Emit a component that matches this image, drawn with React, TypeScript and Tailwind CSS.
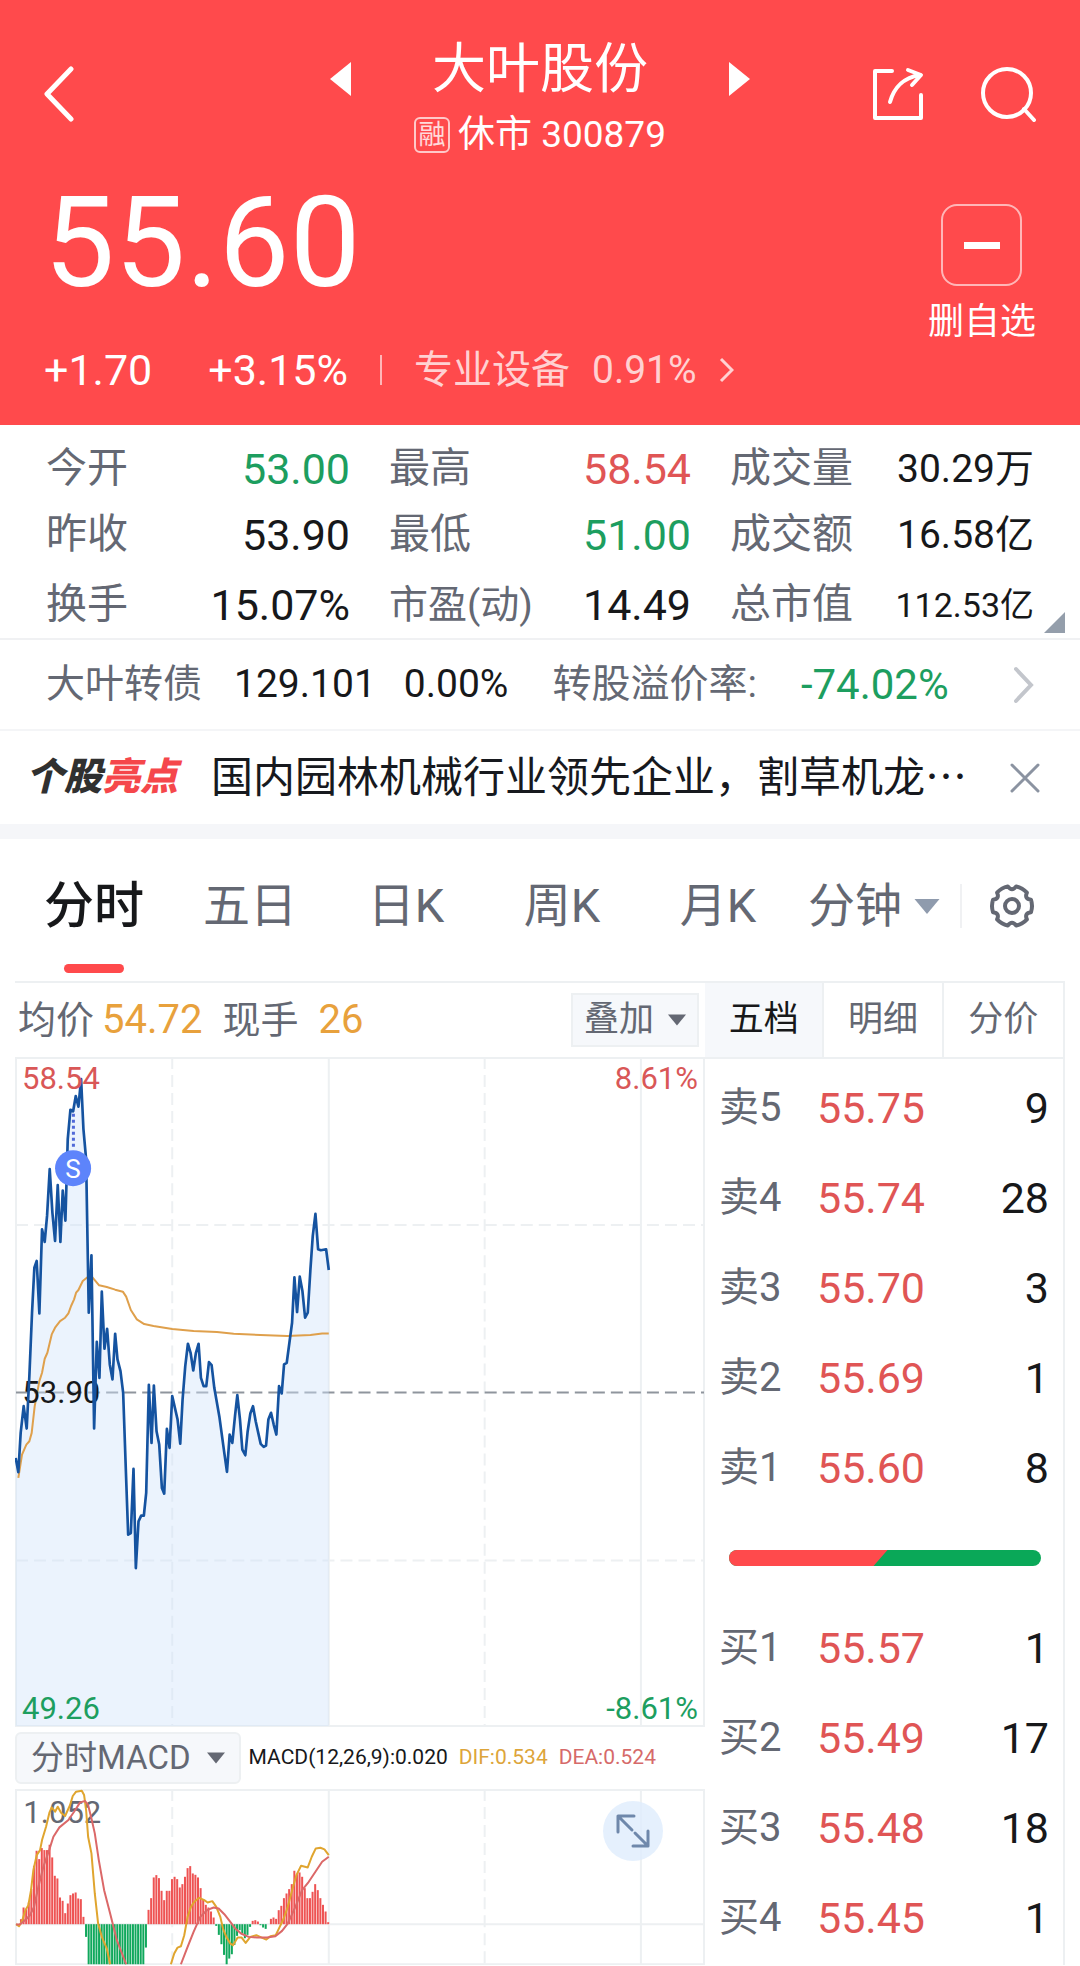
import React, { useState } from 'react';

interface Stat {
  label: string;
  value: string;
  tone?: 'up' | 'down';
  size?: string;
}

interface Level {
  label: string;
  price: string;
  volume: number;
}

const stats: Stat[][] = [
  [
    { label: '今开', value: '53.00', tone: 'down' },
    { label: '最高', value: '58.54', tone: 'up' },
    { label: '成交量', value: '30.29万', size: 'text-[39px]' },
  ],
  [
    { label: '昨收', value: '53.90' },
    { label: '最低', value: '51.00', tone: 'down' },
    { label: '成交额', value: '16.58亿', size: 'text-[39px]' },
  ],
  [
    { label: '换手', value: '15.07%' },
    { label: '市盈(动)', value: '14.49' },
    { label: '总市值', value: '112.53亿', size: 'text-[34px]' },
  ],
];

const asks: Level[] = [
  { label: '卖5', price: '55.75', volume: 9 },
  { label: '卖4', price: '55.74', volume: 28 },
  { label: '卖3', price: '55.70', volume: 3 },
  { label: '卖2', price: '55.69', volume: 1 },
  { label: '卖1', price: '55.60', volume: 8 },
];

const bids: Level[] = [
  { label: '买1', price: '55.57', volume: 1 },
  { label: '买2', price: '55.49', volume: 17 },
  { label: '买3', price: '55.48', volume: 18 },
  { label: '买4', price: '55.45', volume: 1 },
];

const pricePoints =
  '2,1201 10,1244 17,1126 26,1046 35,1113 43,956 51,766 58,631 65,611 73,768 81,516 89,554 96,476 104,336 112,466 120,551 128,384 136,554 143,400 151,490 158,246 166,158 174,163 182,117 190,149 198,66 205,216 213,306 221,766 229,594 237,1113 245,853 253,961 260,703 268,874 276,814 284,921 292,966 300,829 307,906 316,941 324,1006 332,1236 339,1431 347,1426 355,1234 362,1531 370,1391 378,1374 386,1374 393,1306 401,982 409,1156 416,984 424,1121 432,1161 440,1291 447,1308 455,1114 463,1171 471,1016 487,1086 495,1158 502,1026 510,926 518,859 526,886 534,939 542,886 550,859 557,961 565,986 573,986 581,914 589,923 597,991 612,1076 627,1186 635,1243 643,1131 651,1156 659,1076 666,1013 674,1086 681,1176 690,1193 697,1121 705,1068 713,1046 721,1091 736,1159 745,1168 752,1164 759,1086 767,1066 775,1101 783,1131 791,986 799,1008 806,921 814,916 822,856 830,796 837,660 845,764 853,658 861,701 869,781 877,766 885,636 892,536 900,470 908,576 916,579 932,576 940,638';

const averagePoints =
  '10,1261 21,1191 34,1161 43,1151 50,1126 59,1046 73,971 81,946 89,904 97,886 110,831 120,811 135,791 150,781 160,768 168,746 177,726 183,706 190,698 203,671 217,660 232,660 252,684 275,689 300,697 323,703 333,718 347,758 365,786 387,800 415,806 471,815 535,821 605,824 655,829 735,833 815,836 885,833 920,828 940,828';

const macdBars = [
  0, 15, 50, 45, 65, 105, 175, 220, 195, 228, 222, 222, 238, 200, 145, 137, 80, 70, 33, 62, 87, 92, 95, 77, 75, 22,
  -38, -120, -120, -120, -120, -120, -120, -120, -120, -120, -120, -120, -120, -120, -120, -120, -120, -120, -120,
  -120, -120, -120, -120, -70, 43, 78, 140, 147, 138, 100, 72, 100, 100, 135, 142, 135, 110, 120, 142, 168, 174, 152,
  148, 140, 108, 75, 58, 50, 38, 20, -5, -32, -60, -92, -120, -103, -90, -62, -35, -18, -28, -42, -32, -8, 10, 12, 8,
  -3, -10, -14, 0, 16, 20, 16, 42, 55, 78, 92, 105, 120, 160, 150, 155, 142, 108, 78, 78, 97, 120, 102, 78, 58, 38, 6,
];

const difPoints = [
  '48,702 57,708 66,693 76,660 85,645 93,600 100,540 110,495 120,480 126,450 138,410 148,368 155,352 165,365 173,350 183,368 195,378 210,345 218,318 228,305 245,302 252,315 258,360 264,440 274,490 284,610 294,700 305,740 320,775 330,822',
  '512,822 522,790 532,772 542,768 552,735 562,680 572,650 582,635 597,623 612,630 622,637 636,633 648,650 660,680 668,715 678,740 690,760 698,765 712,742 724,742 736,758 750,740 768,735 784,742 798,748 810,738 826,735 838,710 850,685 862,650 878,590 888,555 902,527 922,532 934,500 946,475 960,473 972,478 985,495',
];

const deaPoints = [
  '48,703 60,702 75,690 90,675 102,650 115,590 130,530 148,478 160,440 178,412 205,390 222,365 240,337 255,333 264,345 275,390 284,430 296,510 312,600 330,670 350,750 378,822',
  '542,822 560,775 580,725 600,680 620,660 640,652 655,655 672,672 690,695 705,715 722,730 745,740 770,742 800,742 825,738 845,722 862,700 885,650 905,600 925,575 945,545 965,515 985,500',
];

const toneClass = (tone?: 'up' | 'down'): string => {
  switch (tone) {
    case 'up':
      return 'text-[#e05555]';
    case 'down':
      return 'text-[#1d9e5f]';
    default:
      return 'text-[#17181a]';
  }
};

const Caret: React.FC<{ className: string }> = ({ className }) => (
  <svg viewBox="0 0 20 12" className={className} fill="currentColor" aria-hidden="true">
    <path d="M0 0h20L10 12z" />
  </svg>
);

const Header: React.FC = () => (
  <header className="bg-[#ff4a4c] px-11 text-white">
    <div className="flex h-[166px] items-start justify-between pt-8">
      <div className="flex w-[160px] pt-[34px]">
        <button aria-label="返回">
          <svg viewBox="0 0 30 56" className="h-14 w-[30px]" fill="none" stroke="currentColor" strokeWidth="5" strokeLinecap="round" strokeLinejoin="round">
            <path d="M27 3 3 28l24 25" />
          </svg>
        </button>
      </div>
      <div className="flex w-[420px] flex-col items-center">
        <div className="flex w-full items-center justify-between">
          <button aria-label="上一只" className="pt-[18px]">
            <svg viewBox="0 0 21 34" className="h-[34px] w-[21px]" fill="currentColor"><path d="M21 0v34L0 17z" /></svg>
          </button>
          <h1 className="text-[54px] leading-[76px]">大叶股份</h1>
          <button aria-label="下一只" className="pt-[18px]">
            <svg viewBox="0 0 21 34" className="h-[34px] w-[21px]" fill="currentColor"><path d="M0 0v34l21-17z" /></svg>
          </button>
        </div>
        <div className="flex items-center gap-2 text-[37px] leading-[54px]">
          <span className="flex size-9 items-center justify-center rounded-md border-2 border-white/70 text-[27px] leading-none text-white/80">融</span>
          <span>休市 300879</span>
        </div>
      </div>
      <div className="flex w-[160px] justify-end gap-14 pt-[34px]">
        <button aria-label="分享">
          <svg viewBox="0 0 52 54" className="h-[54px] w-[52px]" fill="none" stroke="currentColor" strokeWidth="4" strokeLinecap="round" strokeLinejoin="round">
            <path d="M20 4H3v47h46V28" />
            <path d="M18 35C22 21 30 11 48 8" />
            <path d="m36 3 13 5-9 10" />
          </svg>
        </button>
        <button aria-label="搜索">
          <svg viewBox="0 0 56 56" className="size-14" fill="none" stroke="currentColor" strokeWidth="4" strokeLinecap="round">
            <circle cx="27" cy="27" r="24" />
            <path d="m44 43 10 11" />
          </svg>
        </button>
      </div>
    </div>
    <div className="flex h-[174px] items-start justify-between">
      <div className="text-[126px] leading-[154px]">55.60</div>
      <button className="flex flex-col items-center pt-[38px]">
        <span className="flex h-[82px] w-[81px] items-center justify-center rounded-2xl border-2 border-white/60">
          <span className="h-[7px] w-9 bg-white" />
        </span>
        <span className="text-[36px] leading-[72px]">删自选</span>
      </button>
    </div>
    <div className="flex items-center pb-[25px] text-[43px] leading-[60px]">
      <span>+1.70</span>
      <span className="ml-14">+3.15%</span>
      <span className="ml-8 h-[30px] w-[2px] bg-white/60" />
      <a href="#sector" className="ml-8 flex items-center gap-[22px] text-[39px] text-white/75">
        <span>专业设备</span>
        <span>0.91%</span>
        <svg viewBox="0 0 15 26" className="h-[26px] w-[15px]" fill="none" stroke="currentColor" strokeWidth="3">
          <path d="m2 2 11 11L2 24" />
        </svg>
      </a>
    </div>
  </header>
);

const StatsGrid: React.FC = () => (
  <section className="relative border-b-2 border-[#f0f1f3] px-[46px] pt-[11px] text-[41px]">
    {stats.map((row, index) => (
      <dl key={index} className="grid h-[66px] grid-cols-[304fr_302fr_304fr] gap-[39px] last-of-type:mt-1">
        {row.map((stat) => (
          <div key={stat.label} className="flex items-center justify-between whitespace-nowrap">
            <dt className={`text-[#646873] ${stat.label.length > 3 ? 'text-[39px]' : ''}`}>{stat.label}</dt>
            <dd className={`${stat.size || 'text-[43px]'} ${toneClass(stat.tone)}`}>{stat.value}</dd>
          </div>
        ))}
      </dl>
    ))}
    <svg viewBox="0 0 21 21" className="absolute right-[15px] bottom-[5px] size-[21px]" fill="#949eab"><path d="M21 0v21H0z" /></svg>
  </section>
);

const BondRow: React.FC = () => (
  <a href="#bond" className="flex h-[91px] items-center border-b-2 border-[#f4f5f7] px-[46px] text-[39px] whitespace-nowrap text-[#17181a]">
    <span className="text-[#646873]">大叶转债</span>
    <span className="ml-8">129.101</span>
    <span className="ml-7">0.00%</span>
    <span className="ml-11 text-[#646873]">转股溢价率:</span>
    <span className="ml-11 text-[42px] text-[#1d9e5f]">-74.02%</span>
    <svg viewBox="0 0 20 38" className="ml-auto h-[38px] w-5" fill="none" stroke="#c3c6cc" strokeWidth="4" strokeLinecap="round">
      <path d="m2 3 15 16L2 35" />
    </svg>
  </a>
);

const Highlights: React.FC = () => (
  <section className="flex h-[93px] items-center pr-10 pl-[26px]">
    <h2 className="w-[185px] text-[38px] font-black text-[#303030] italic">
      个股<span className="text-[#f5474b]">亮点</span>
    </h2>
    <p className="min-w-0 flex-1 truncate text-[42px] text-[#17191e]">国内园林机械行业领先企业，割草机龙⋯</p>
    <button aria-label="关闭" className="ml-5">
      <svg viewBox="0 0 30 30" className="size-[30px]" fill="none" stroke="#8b93a1" strokeWidth="3" strokeLinecap="round">
        <path d="m2 2 26 26M28 2 2 28" />
      </svg>
    </button>
  </section>
);

const ChartTabs: React.FC = () => {
  const [active, setActive] = useState<string>('分时');
  return (
    <nav className="flex h-[157px] items-stretch border-t-[15px] border-[#f5f6f9] pr-[46px] pl-4 text-[47px] text-[#646873]">
      {['分时', '五日', '日K', '周K', '月K'].map((tab) => (
        <button
          key={tab}
          onClick={() => setActive(tab)}
          className={`relative h-full flex-1 pb-2 ${active === tab ? 'text-[50px] font-medium text-[#17181a]' : ''}`}
        >
          {tab}
          {active === tab && <span className="absolute bottom-2 left-1/2 h-[9px] w-[60px] -translate-x-1/2 rounded-full bg-[#ff4a4c]" />}
        </button>
      ))}
      <div className="flex shrink-0 items-center pb-2 pl-3">
        <button className="flex items-center gap-3">
          分钟
          <Caret className="h-[15px] w-[26px] text-[#8f9bad]" />
        </button>
        <span className="ml-5 h-11 w-[2px] bg-[#f0f1f3]" />
        <button aria-label="设置" className="ml-7">
          <svg viewBox="-22 -22 44 44" className="size-11" fill="none" stroke="currentColor" strokeWidth="4" strokeLinejoin="round">
            <path d="M19-6.200Q21 0 19 6.200Q12.100 7 14.900 13.400Q10.500 18.200 4.200 19.600Q0 14-4.200 19.600Q-10.500 18.200-14.900 13.400Q-12.100 7-19 6.200Q-21 0-19-6.200Q-12.100-7-14.900-13.400Q-10.500-18.200-4.200-19.600Q0-14 4.200-19.600Q10.500-18.200 14.900-13.400Q12.100-7 19-6.200z" />
            <circle r="7" />
          </svg>
        </button>
      </div>
    </nav>
  );
};

const PriceChart: React.FC = () => (
  <div className="relative text-[31px] leading-9">
    <svg viewBox="0 0 2067 2007" className="block w-full" fill="none" strokeLinejoin="round">
      <g stroke="#edf0f2" strokeWidth="6">
        <path d="M3 0v2007M940 0v2007M1875 0v2007M2064 0v2007M0 3h2067M0 2004h2067" />
        <path d="M471 0v2007M1407 0v2007" strokeDasharray="36 18" />
        <path d="M3 503h2061M3 1508h2061" strokeDasharray="36 18" />
      </g>
      <path d="M3 1005h2061" stroke="#8f959d" strokeWidth="6" strokeDasharray="36 18" />
      <polygon points={`2,2004 ${pricePoints} 940,2004`} fill="#cfe3fb" fillOpacity="0.42" />
      <polyline points={averagePoints} stroke="#dfa04c" strokeWidth="6" />
      <text x="22" y="1036" fill="#17181a" fontSize="93">53.90</text>
      <polyline points={pricePoints} stroke="#1553a0" strokeWidth="8" />
      <path d="M175 170v105" stroke="#5069d8" strokeWidth="9" strokeDasharray="9 9" />
      <circle cx="174" cy="333" r="54" fill="#5d84fb" />
      <text x="174" y="361" fill="#fff" fontSize="78" textAnchor="middle">S</text>
    </svg>
    <span className="absolute top-1 left-[7px] text-[#d95757]">58.54</span>
    <span className="absolute top-1 right-[7px] text-[#d95757]">8.61%</span>
    <span className="absolute bottom-0 left-[7px] text-[#1d9e5f]">49.26</span>
    <span className="absolute right-[7px] bottom-0 text-[#1d9e5f]">-8.61%</span>
  </div>
);

const MacdChart: React.FC = () => (
  <div className="relative">
    <svg viewBox="45 297 2067 528" className="block w-full" fill="none" strokeLinejoin="round">
      <g stroke="#edf0f2" strokeWidth="6">
        <path d="M48 297v528M985 297v528M1920 297v528M2109 297v528M45 300h2067M45 702h2067M45 822h2067" />
        <path d="M516 297v528M1452 297v528" strokeDasharray="36 18" />
      </g>
      {macdBars.map((bar, index) => (
        <rect
          key={index}
          x={52 + index * 7.8}
          y={bar > 0 ? 702 - bar : 702}
          width="6"
          height={Math.abs(bar)}
          fill={bar > 0 ? '#ee5353' : '#10a85c'}
        />
      ))}
      <text x="70" y="398" fill="#646873" fontSize="93">1.052</text>
      {difPoints.map((points) => <polyline key={points} points={points} stroke="#e0a52f" strokeWidth="6" />)}
      {deaPoints.map((points) => <polyline key={points} points={points} stroke="#db6868" strokeWidth="6" />)}
    </svg>
    <button aria-label="全屏" className="absolute top-3 right-[42px] flex size-[60px] items-center justify-center rounded-full bg-[#dfecfd]/80">
      <svg viewBox="0 0 36 36" className="size-9" fill="none" stroke="#6f88ab" strokeWidth="3" strokeLinecap="round" strokeLinejoin="round">
        <path d="M3 19V3h16M3 3l14 14M33 18v15H18M33 33 20 20" />
      </svg>
    </button>
  </div>
);

const LevelRow: React.FC<{ level: Level }> = ({ level }) => (
  <tr className="h-[90px]">
    <th scope="row" className="w-28 pl-[14px] text-left text-[40px] font-normal text-[#646873]">{level.label}</th>
    <td className="text-[#e05555]">{level.price}</td>
    <td className="pr-[14px] text-right text-[#17181a]">{level.volume}</td>
  </tr>
);

const OrderBook: React.FC = () => {
  const [tab, setTab] = useState<string>('五档');
  return (
    <aside className="border-r-2 border-[#edf0f2]">
      <div className="grid h-[76px] grid-cols-3 divide-x-2 divide-[#edf0f2] border-b-2 border-[#edf0f2] text-[35px] text-[#646873]">
        {['五档', '明细', '分价'].map((name) => (
          <button key={name} onClick={() => setTab(name)} className={tab === name ? 'bg-[#f6f8fb] text-[#17181a]' : ''}>
            {name}
          </button>
        ))}
      </div>
      <table className="mt-1 w-full text-[43px]">
        <tbody>
          {asks.map((level) => <LevelRow key={level.label} level={level} />)}
          <tr className="h-[90px]">
            <td colSpan={3} className="pr-[22px] pl-6">
              <div className="h-4 overflow-hidden rounded-full bg-[#0aa858]">
                <svg viewBox="0 0 313 16" className="block h-4 w-full" preserveAspectRatio="none"><path d="M0 0h159l-14 16H0z" fill="#ff4a4c" /></svg>
              </div>
            </td>
          </tr>
          {bids.map((level) => <LevelRow key={level.label} level={level} />)}
        </tbody>
      </table>
    </aside>
  );
};

const App: React.FC = () => (
  <main className="bg-white font-['Roboto','Noto_Sans_CJK_SC',sans-serif]">
    <Header />
    <StatsGrid />
    <BondRow />
    <Highlights />
    <ChartTabs />
    <div className="mx-[15px] grid grid-cols-[690fr_360fr] border-t-2 border-[#edf0f2]">
      <div className="min-w-0">
        <div className="flex h-[74px] items-center pr-[6px] pl-[3px] text-[38px] text-[#646873]">
          <span>均价</span>
          <span className="ml-2 text-[40px] text-[#e8a13c]">54.72</span>
          <span className="ml-5">现手</span>
          <span className="ml-5 text-[40px] text-[#e8a13c]">26</span>
          <button className="ml-auto flex h-[54px] items-center gap-[14px] border-2 border-[#edf0f2] bg-[#f6f8fb] px-[11px] text-[35px]">
            叠加
            <Caret className="h-3 w-[18px]" />
          </button>
        </div>
        <PriceChart />
        <div className="flex h-[62px] items-center text-[21px] whitespace-nowrap">
          <button className="mr-2 flex h-[52px] items-center gap-4 rounded-md border-2 border-[#edf0f2] bg-[#f6f8fb] px-[14px] text-[33px] text-[#646873]">
            分时MACD
            <Caret className="h-3 w-[18px]" />
          </button>
          <span className="text-[#17181a]">MACD(12,26,9):0.020</span>
          <span className="ml-[11px] text-[#dda53a]">DIF:0.534</span>
          <span className="ml-[11px] text-[#d66a6a]">DEA:0.524</span>
        </div>
        <MacdChart />
      </div>
      <OrderBook />
    </div>
  </main>
);

export default App;
